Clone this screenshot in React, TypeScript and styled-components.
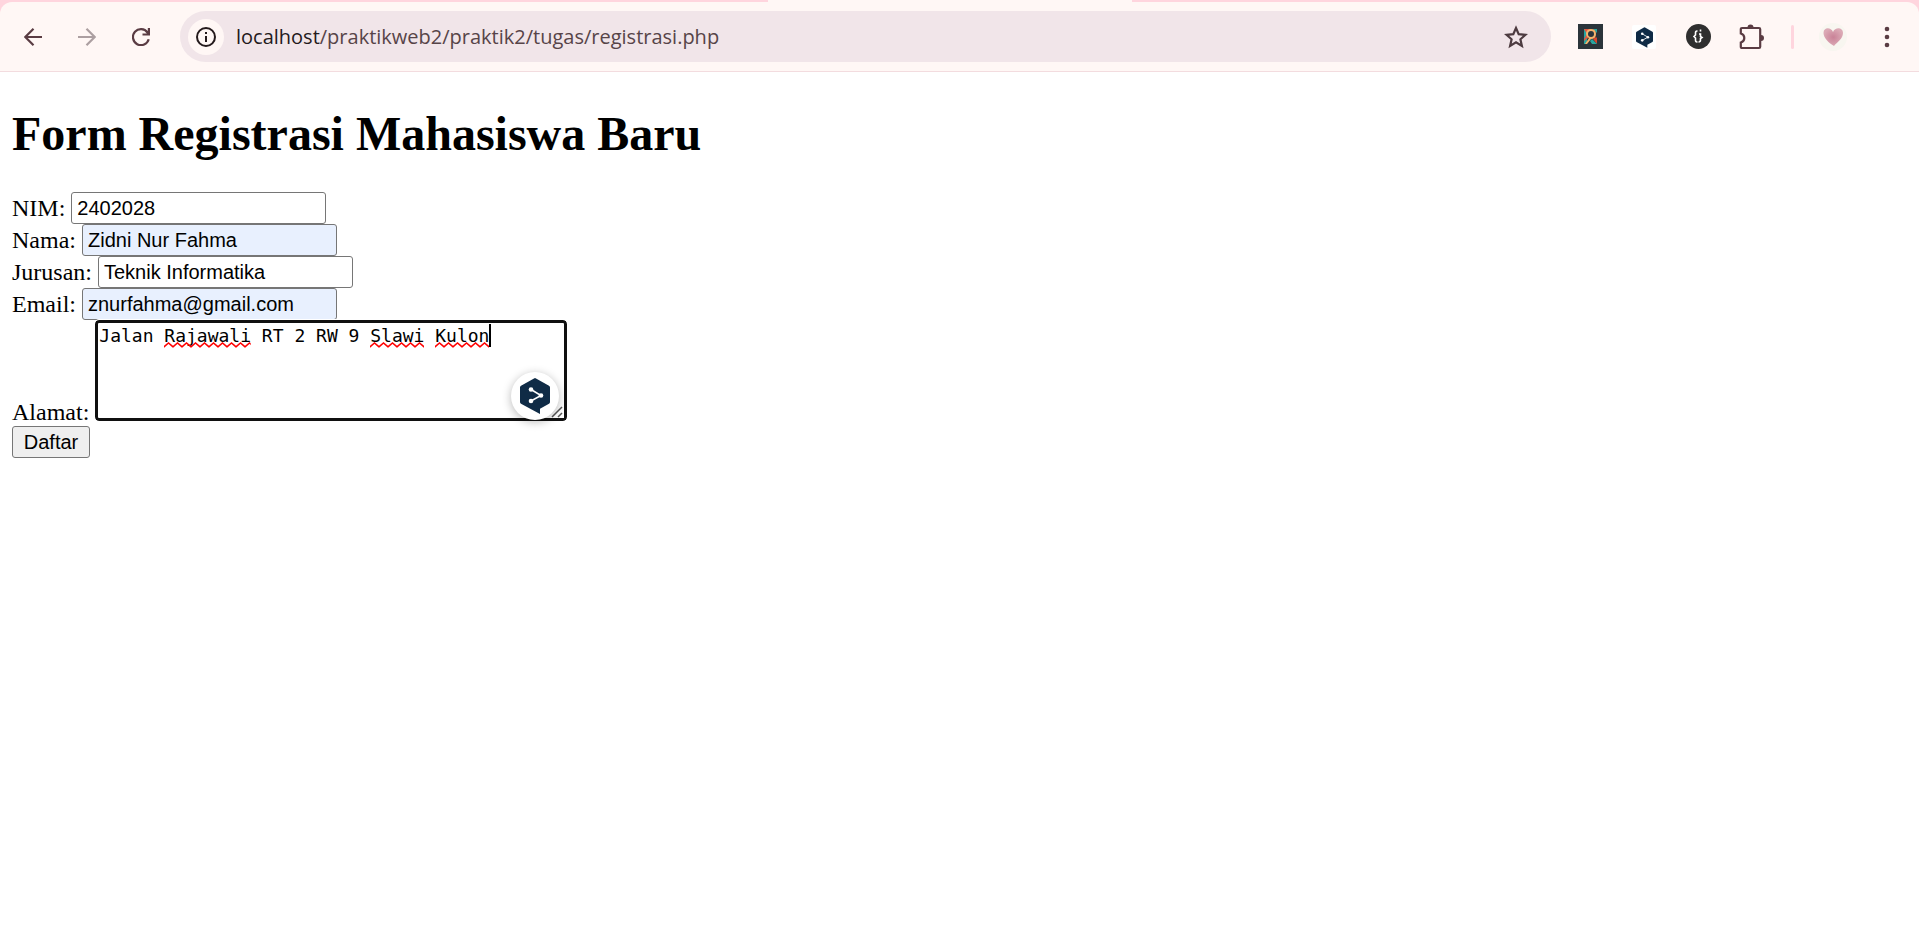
import React, { useId, useState } from "react";
import styled, { createGlobalStyle } from "styled-components";

const GlobalStyle = createGlobalStyle`
  * { box-sizing: border-box; }
  body {
    margin: 0;
    background: #fff;
    color: #000;
    font-family: "Liberation Serif", "Times New Roman", serif;
    font-size: 24px;
  }
`;

const TabStrip = styled.div`
  display: flex;
  justify-content: center;
  background: #ffd5de;
`;

const Toolbar = styled.header`
  flex: 1;
  display: flex;
  align-items: center;
  height: 70px;
  margin-top: 2px;
  padding: 0 5px 0 15px;
  background: #fff7f5;
  border-bottom: 1px solid #f3dcdf;
  border-radius: 12px 12px 0 0;
  position: relative;
`;

const ActiveTab = styled.div`
  position: absolute;
  top: -2px;
  left: 40%;
  width: 19%;
  height: 2px;
  background: #fff7f5;
`;

const IconButton = styled.button`
  display: flex;
  flex: none;
  align-items: center;
  justify-content: center;
  width: 54px;
  height: 54px;
  padding: 0;
  border: 0;
  background: none;
  color: #5a3c43;
  &:disabled { color: #ac9fa1; }
`;

const NavGroup = styled.nav`
  display: flex;
  margin-left: -9px;
`;

const AddressBar = styled.div`
  flex: 1;
  display: flex;
  align-items: center;
  height: 51px;
  margin-left: 12px;
  padding: 0 8px;
  border-radius: 26px;
  background: #f1e5e9;
`;

const InfoButton = styled.button`
  display: flex;
  flex: none;
  align-items: center;
  justify-content: center;
  width: 36px;
  height: 36px;
  padding: 0;
  border: 0;
  border-radius: 50%;
  background: #fff7f5;
  color: #241a1c;
`;

const Url = styled.div`
  flex: 1;
  padding-left: 12px;
  font: 20px/30px "Open Sans", "Noto Sans", sans-serif;
  color: #574448;
`;

const Host = styled.span`
  color: #241a1c;
`;

const Extensions = styled.div`
  display: flex;
  align-items: center;
  margin-left: 12px;
`;

const Divider = styled.span`
  width: 3px;
  height: 24px;
  margin: 0 12px;
  border-radius: 2px;
  background: #ffd5de;
`;

const Page = styled.main`
  padding: 34px 12px;
`;

const Title = styled.h1`
  margin: 0 0 30px;
  font-size: 48px;
  line-height: 56px;
`;

const Form = styled.form`
  display: flex;
  flex-direction: column;
  align-items: flex-start;
`;

const Row = styled.div<{ $end?: boolean }>`
  display: flex;
  align-items: ${(p) => (p.$end ? "flex-end" : "center")};
  gap: 6px;
`;

const Label = styled.label`
  line-height: 28px;
`;

const TextInput = styled.input<{ $filled?: boolean }>`
  width: 255px;
  height: 32px;
  padding: 2px 5px;
  border: 1px solid #767676;
  border-radius: 3px;
  background: ${(p) => (p.$filled ? "#e8f0fe" : "#fff")};
  color: #000;
  font: 20px/24px "Liberation Sans", Arial, sans-serif;
`;

const AreaWrap = styled.div`
  position: relative;
  display: flex;
  margin-bottom: 5px;
  font: 18px/24px "DejaVu Sans Mono", monospace;
`;

const TextArea = styled.textarea`
  width: 472px;
  height: 101px;
  padding: 1px;
  border: 3px solid #101010;
  border-radius: 4px;
  outline: 1px solid #fff;
  background: #fff;
  color: #000;
  font: inherit;
  caret-color: transparent;
  resize: both;
`;

const Squiggle = styled.svg<{ $start: number; $length: number }>`
  position: absolute;
  top: 22px;
  left: calc(4px + ${(p) => p.$start}ch);
  width: ${(p) => p.$length}ch;
  height: 6px;
`;

const Caret = styled.span`
  position: absolute;
  top: 4px;
  left: calc(4px + 36ch);
  width: 2px;
  height: 23px;
  background: #000;
`;

const Grip = styled.svg`
  position: absolute;
  right: 3px;
  bottom: 3px;
  background: #fff;
  pointer-events: none;
`;

const HelperButton = styled.button`
  position: absolute;
  right: 8px;
  bottom: 1px;
  display: flex;
  align-items: center;
  justify-content: center;
  width: 48px;
  height: 48px;
  padding: 0;
  border: 0;
  border-radius: 50%;
  background: #fff;
  box-shadow: 0 2px 10px rgba(0, 0, 0, 0.28);
`;

const Submit = styled.button`
  width: 78px;
  height: 32px;
  padding: 0;
  border: 1px solid #767676;
  border-radius: 3px;
  background: #efefef;
  color: #000;
  font: 20px/24px "Liberation Sans", Arial, sans-serif;
`;

const TranslateGlyph = ({ width, height }: { width: number; height: number }) => (
  <svg width={width} height={height} viewBox="0 0 30 36" aria-hidden="true">
    <path d="M14 .4q1-.6 2 0l13 7.300q1 .6 1 1.700v14.600q0 1.200-1 1.800l-9 5V36L1 25.800q-1-.6-1-1.800V9.400q0-1.100 1-1.700z" fill="#0f2b46" />
    <path d="M11 11.500 21 17.500 11 23" fill="none" stroke="#fff" strokeWidth="1.500" />
    <circle cx="11" cy="11.500" r="2.300" fill="#fff" />
    <circle cx="21" cy="17.500" r="2.300" fill="#fff" />
    <circle cx="11" cy="23" r="2.300" fill="#fff" />
  </svg>
);

const Misspelling = ({ start, length }: { start: number; length: number }) => {
  const id = useId();
  return (
    <Squiggle $start={start} $length={length} aria-hidden="true">
      <defs>
        <pattern id={id} width="9" height="6" patternUnits="userSpaceOnUse">
          <path d="M-1 5.500 0 4.800 4.500 1 9 4.800 10 5.500" fill="none" stroke="#f00" strokeWidth="1.500" />
        </pattern>
      </defs>
      <rect width="100%" height="6" fill={`url(#${id})`} />
    </Squiggle>
  );
};

const fields = [
  { name: "nim", label: "NIM:", type: "text", value: "2402028", filled: false },
  { name: "nama", label: "Nama:", type: "text", value: "Zidni Nur Fahma", filled: true },
  { name: "jurusan", label: "Jurusan:", type: "text", value: "Teknik Informatika", filled: false },
  { name: "email", label: "Email:", type: "email", value: "znurfahma@gmail.com", filled: true },
];

export default function App() {
  const [address, setAddress] = useState("Jalan Rajawali RT 2 RW 9 Slawi Kulon");
  return (
    <>
      <GlobalStyle />
      <TabStrip>
        <Toolbar>
          <ActiveTab />
          <NavGroup>
            <IconButton aria-label="Back">
              <svg width="18" height="18" viewBox="0 0 18 18" fill="none" stroke="currentColor" strokeWidth="2.200"><path d="M18 9H1.500M9.500.8 1.300 9l8.200 8.200" /></svg>
            </IconButton>
            <IconButton aria-label="Forward" disabled>
              <svg width="18" height="18" viewBox="0 0 18 18" fill="none" stroke="currentColor" strokeWidth="2.200"><path d="M0 9h16.500M8.500.8 16.700 9l-8.200 8.200" /></svg>
            </IconButton>
            <IconButton aria-label="Reload">
              <svg width="18" height="18" viewBox="0 0 18 18" fill="none" stroke="currentColor" strokeWidth="2.200"><path d="M16.700 11.200A8 8 0 1 1 15.500 4.500L17 6.200M16.900 0v6.500H10.500" /></svg>
            </IconButton>
          </NavGroup>
          <AddressBar>
            <InfoButton aria-label="Site information">
              <svg width="20" height="20" viewBox="0 0 20 20" fill="none" stroke="currentColor" strokeWidth="2"><circle cx="10" cy="10" r="9" /><path d="M10 9v6M10 5v2" /></svg>
            </InfoButton>
            <Url><Host>localhost</Host>/praktikweb2/praktik2/tugas/registrasi.php</Url>
            <IconButton aria-label="Bookmark">
              <svg width="24" height="24" viewBox="0 0 24 24" fill="none" stroke="#4d3b40" strokeWidth="2.200"><path d="m12 3 2.700 6.200 6.800.6-5.100 4.500 1.500 6.600L12 17.400l-5.900 3.500 1.500-6.600L2.500 9.800l6.800-.6z" /></svg>
            </IconButton>
          </AddressBar>
          <Extensions>
            <IconButton aria-label="R extension">
              <svg width="25" height="25" viewBox="0 0 25 25">
                <path fill="#2b343a" d="M0 0h25v25H0z" />
                <path fill="#e4573d" d="M6 5h7v5l-7 9z" />
                <path fill="#2aa5a0" d="m6 5 3 5-3 5zM15 5h4v4zM6 20v-3l3-3v6z" />
                <path fill="#f6b36b" d="M8 9q1-4 5-4 5 0 5 5t-5 5l-4 5H7l4-6q-3-1-3-5z" />
                <circle cx="13" cy="10" r="3" fill="#2b343a" />
                <path fill="#d9472f" d="m15 15 3-2 1 1v6z" />
                <path fill="#2aa5a0" d="m14 15 5 5h-5l-2-3z" />
              </svg>
            </IconButton>
            <IconButton aria-label="Translate">
              <svg width="24" height="24" viewBox="0 0 24 24"><rect width="24" height="24" rx="2" fill="#fff" /><g transform="translate(4 2)"><TranslateGlyph width={17} height={21} /></g></svg>
            </IconButton>
            <IconButton aria-label="JSON viewer">
              <svg width="25" height="25" viewBox="0 0 25 25" fill="none" stroke="#fff" strokeWidth="1.600"><circle cx="12.500" cy="12.500" r="12.500" fill="#2f2f2f" stroke="none" /><path d="M11.500 7H11q-1.500 0-1.500 2v2L8 12.500 9.500 14v2q0 2 1.500 2h.5M13 10h1.500v2.500L16 13.500l-1.500 1V16q0 2-2 2M14.500 5.500v2" /></svg>
            </IconButton>
            <IconButton aria-label="Extensions">
              <svg width="26" height="26" viewBox="0 0 26 26"><path d="M3 4h17q1.200 0 1.200 1.200v17.600q0 1.200-1.200 1.200H3q-1.200 0-1.200-1.200V18.500q3.500-1 3.500-4.500t-3.500-4.500V5.200Q1.800 4 3 4z" fill="none" stroke="currentColor" strokeWidth="2.200" /><path d="M8.500 3.500a3 3 0 0 1 6 0zM22 11a3 3 0 0 1 0 6z" fill="currentColor" /></svg>
            </IconButton>
            <Divider />
            <IconButton aria-label="Profile">
              <svg width="28" height="28" viewBox="0 0 28 28">
                <defs>
                  <radialGradient id="heart"><stop offset="0" stopColor="#c98297" /><stop offset="1" stopColor="#dba9b5" /></radialGradient>
                </defs>
                <circle cx="14" cy="14" r="14" fill="#f8f6f0" />
                <path d="M14 9c2-5 10-5 10 1 0 6-6 9-9 13C10 20 4.500 15 4.500 10c0-6 7.500-6 9.500-1z" fill="url(#heart)" />
              </svg>
            </IconButton>
            <IconButton aria-label="Menu">
              <svg width="6" height="22" viewBox="0 0 6 22" fill="currentColor"><circle cx="3" cy="3" r="2.300" /><circle cx="3" cy="11" r="2.300" /><circle cx="3" cy="19" r="2.300" /></svg>
            </IconButton>
          </Extensions>
        </Toolbar>
      </TabStrip>
      <Page>
        <Title>Form Registrasi Mahasiswa Baru</Title>
        <Form onSubmit={(e) => e.preventDefault()}>
          {fields.map((f) => (
            <Row key={f.name}>
              <Label htmlFor={f.name}>{f.label}</Label>
              <TextInput id={f.name} name={f.name} type={f.type} defaultValue={f.value} $filled={f.filled} />
            </Row>
          ))}
          <Row $end>
            <Label htmlFor="alamat">Alamat:</Label>
            <AreaWrap>
              <TextArea id="alamat" name="alamat" value={address} onChange={(e) => setAddress(e.target.value)} />
              <Misspelling start={6} length={8} />
              <Misspelling start={25} length={5} />
              <Misspelling start={31} length={5} />
              <Caret />
              <Grip width="14" height="14" viewBox="0 0 14 14" aria-hidden="true">
                <path d="M2 13 12 3M8 13l4-4" stroke="#555" strokeWidth="1.500" />
              </Grip>
              <HelperButton type="button" aria-label="Translate text">
                <TranslateGlyph width={30} height={36} />
              </HelperButton>
            </AreaWrap>
          </Row>
          <Submit type="submit">Daftar</Submit>
        </Form>
      </Page>
    </>
  );
}
